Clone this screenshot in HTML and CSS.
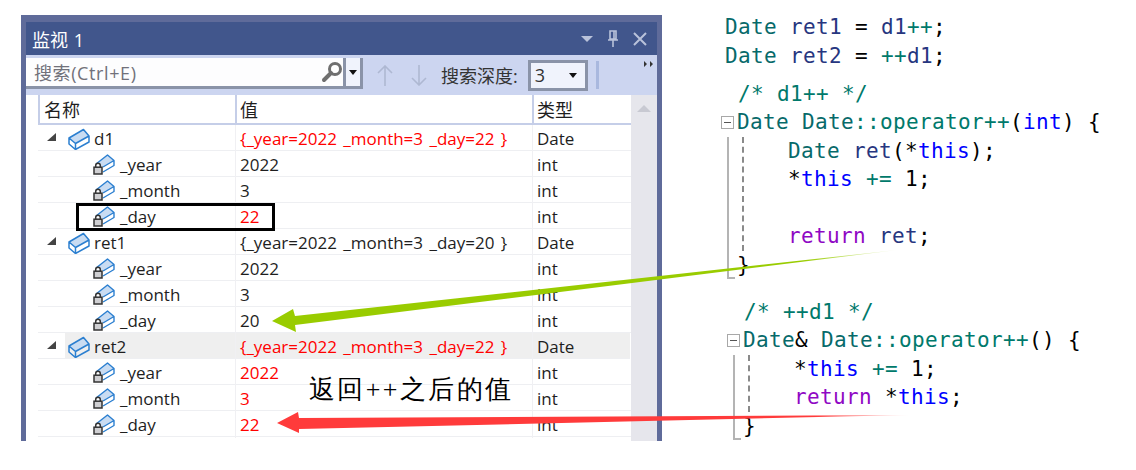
FILE: index.html
```html
<!DOCTYPE html>
<html lang="zh">
<head>
<meta charset="utf-8">
<title>监视 1</title>
<link rel="stylesheet" href="styles.css">
</head>
<body>
<svg class="defs" width="0" height="0" aria-hidden="true">
  <defs>
    <symbol id="cube" viewBox="0 0 22 22">
      <path d="M1 10 15.5 1.5 21 8 7.5 15.5Z" fill="#c9dcf2"/>
      <path d="M1 10 15.5 1.5 21 8V14L7.5 21.5 1 16ZM1 10 7.5 15.5 21 8M7.5 15.5V21.5" fill="none" stroke="#2b7fd0" stroke-width="1.5" stroke-linejoin="round"/>
    </symbol>
    <symbol id="member" viewBox="0 0 22 21">
      <path d="M3 10 14.5 1 21 6.5 10 13Z" fill="#c9dcf2"/>
      <path d="M3 10 14.5 1 21 6.5V11.5L10 18M10 13 21 6.5" fill="none" stroke="#2b7fd0" stroke-width="1.4" stroke-linejoin="round"/>
      <path d="M2.7 13V11.5a2.3 2.3 0 0 1 4.6 0V13" fill="#fff" stroke="#333" stroke-width="1.5"/>
      <rect x="1" y="13.2" width="8" height="6.8" fill="#cfcfd2" stroke="#333" stroke-width="1.5"/>
    </symbol>
  </defs>
</svg>
<main class="canvas">
  <section class="watch">
    <header class="titlebar">
      <span class="title">监视 1</span>
      <span class="controls">
        <svg class="ctl-drop" width="12" height="6" viewBox="0 0 12 6"><path d="M0 0H12L6 6Z" fill="#b9c2da"/></svg>
        <svg class="ctl-pin" width="10" height="18" viewBox="0 0 10 18"><path d="M2 1H8V9H2ZM0 10H10M5 10V17M6 1V9" fill="none" stroke="#b9c2da" stroke-width="1.6"/></svg>
        <svg class="ctl-x" width="14" height="14" viewBox="0 0 14 14"><path d="M1 1 13 13M13 1 1 13" fill="none" stroke="#b9c2da" stroke-width="2"/></svg>
      </span>
    </header>
    <div class="toolbar">
      <div class="searchbox">
        <span class="placeholder">搜索(Ctrl+E)</span>
        <svg width="22" height="22" viewBox="0 0 22 22"><circle cx="14" cy="8" r="5.5" fill="#fff" stroke="#6f6f6f" stroke-width="3"/><path d="M10 12 3 19" stroke="#6f6f6f" stroke-width="4" stroke-linecap="round"/></svg>
      </div>
      <div class="dropbtn"><i class="caret"></i></div>
      <svg class="arrow-up" width="16" height="21" viewBox="0 0 16 21"><path d="M8 21V1M1 8 8 1 15 8" fill="none" stroke="#aeb8d2" stroke-width="1.6"/></svg>
      <svg class="arrow-down" width="16" height="21" viewBox="0 0 16 21"><path d="M8 0V20M1 13 8 20 15 13" fill="none" stroke="#aeb8d2" stroke-width="1.6"/></svg>
      <span class="depth-label">搜索深度:</span>
      <div class="combo"><span>3</span><i class="caret"></i></div>
      <i class="tool-sep"></i>
      <svg class="overflow" width="9" height="6" viewBox="0 0 9 6"><path d="M0 0 3 3 0 6ZM6 0 9 3 6 6Z" fill="#333"/></svg>
    </div>
    <div class="body">
      <div class="table">
        <div class="row head">
          <div class="cell name">名称</div>
          <div class="cell">值</div>
          <div class="cell">类型</div>
        </div>

        <div class="row parent">
          <div class="cell name"><i class="tri"></i><span class="label"><svg width="22" height="22"><use href="#cube"/></svg>d1</span></div>
          <div class="cell red">{_year=2022 _month=3 _day=22 }</div>
          <div class="cell">Date</div>
        </div>
        <div class="row child">
          <div class="cell name"><svg width="22" height="21"><use href="#member"/></svg>_year</div>
          <div class="cell">2022</div>
          <div class="cell">int</div>
        </div>
        <div class="row child">
          <div class="cell name"><svg width="22" height="21"><use href="#member"/></svg>_month</div>
          <div class="cell">3</div>
          <div class="cell">int</div>
        </div>
        <div class="row child">
          <div class="cell name"><svg width="22" height="21"><use href="#member"/></svg>_day</div>
          <div class="cell red">22</div>
          <div class="cell">int</div>
        </div>

        <div class="row parent">
          <div class="cell name"><i class="tri"></i><span class="label"><svg width="22" height="22"><use href="#cube"/></svg>ret1</span></div>
          <div class="cell">{_year=2022 _month=3 _day=20 }</div>
          <div class="cell">Date</div>
        </div>
        <div class="row child">
          <div class="cell name"><svg width="22" height="21"><use href="#member"/></svg>_year</div>
          <div class="cell">2022</div>
          <div class="cell">int</div>
        </div>
        <div class="row child">
          <div class="cell name"><svg width="22" height="21"><use href="#member"/></svg>_month</div>
          <div class="cell">3</div>
          <div class="cell">int</div>
        </div>
        <div class="row child">
          <div class="cell name"><svg width="22" height="21"><use href="#member"/></svg>_day</div>
          <div class="cell">20</div>
          <div class="cell">int</div>
        </div>

        <div class="row parent selected">
          <div class="cell name"><i class="tri"></i><span class="label"><svg width="22" height="22"><use href="#cube"/></svg>ret2</span></div>
          <div class="cell red">{_year=2022 _month=3 _day=22 }</div>
          <div class="cell">Date</div>
        </div>
        <div class="row child">
          <div class="cell name"><svg width="22" height="21"><use href="#member"/></svg>_year</div>
          <div class="cell red">2022</div>
          <div class="cell">int</div>
        </div>
        <div class="row child">
          <div class="cell name"><svg width="22" height="21"><use href="#member"/></svg>_month</div>
          <div class="cell red">3</div>
          <div class="cell">int</div>
        </div>
        <div class="row child">
          <div class="cell name"><svg width="22" height="21"><use href="#member"/></svg>_day</div>
          <div class="cell red">22</div>
          <div class="cell">int</div>
        </div>
      </div>
      <div class="scrollbar"><svg width="14" height="7" viewBox="0 0 14 7"><path d="M0 7 7 0 14 7Z" fill="#c8c9d2"/></svg></div>
    </div>
  </section>

  <section class="code">
    <div class="line call"><span class="t">Date</span> <span class="v">ret1</span> = <span class="v">d1</span><span class="o">++</span>;</div>
    <div class="line call"><span class="t">Date</span> <span class="v">ret2</span> = <span class="o">++</span><span class="v">d1</span>;</div>

    <div class="block first">
      <div class="line comment">/* d1++ */</div>
      <div class="line fold-head"><i class="fold-box"></i><span><span class="t">Date Date</span><span class="o">::operator++</span>(<span class="k">int</span>) {</span></div>
      <div class="fold-body">
        <div class="guide">
          <div class="line"><span class="t">Date</span> <span class="v">ret</span>(*<span class="k">this</span>);</div>
          <div class="line">*<span class="k">this</span> <span class="o">+=</span> 1;</div>
          <div class="line">&nbsp;</div>
          <div class="line"><span class="r">return</span> <span class="v">ret</span>;</div>
        </div>
        <div class="line fold-end">}</div>
      </div>
    </div>

    <div class="block second">
      <div class="line comment">/* ++d1 */</div>
      <div class="line fold-head"><i class="fold-box"></i><span><span class="t">Date</span>&amp; <span class="t">Date</span><span class="o">::operator++</span>() {</span></div>
      <div class="fold-body">
        <div class="guide">
          <div class="line">*<span class="k">this</span> <span class="o">+=</span> 1;</div>
          <div class="line"><span class="r">return</span> *<span class="k">this</span>;</div>
        </div>
        <div class="line fold-end">}</div>
      </div>
    </div>
  </section>

  <div class="highlight"></div>
  <div class="note">返回++之后的值</div>
  <svg class="arrows" width="1136" height="470" viewBox="0 0 1136 470" aria-hidden="true">
    <defs>
      <linearGradient id="gfade" gradientUnits="userSpaceOnUse" x1="272" y1="0" x2="897" y2="0">
        <stop offset="0.85" stop-color="#99cc00"/>
        <stop offset="1" stop-color="#99cc00" stop-opacity="0.1"/>
      </linearGradient>
      <linearGradient id="rfade" gradientUnits="userSpaceOnUse" x1="277" y1="0" x2="909" y2="0">
        <stop offset="0.85" stop-color="#ff3b3b"/>
        <stop offset="1" stop-color="#ff3b3b" stop-opacity="0.1"/>
      </linearGradient>
    </defs>
    <path d="M272 321 293 309 295 316 897 250 295 325 296 332Z" fill="url(#gfade)"/>
    <path d="M277 423 298 412 299 418 909 415 299 429 299 433Z" fill="url(#rfade)"/>
  </svg>
</main>
</body>
</html>
```

FILE: styles.css
```css
* { box-sizing: border-box; }
html, body { margin: 0; padding: 0; background: #fff; }
.defs { position: absolute; }

.canvas {
  position: relative;
  width: 1136px;
  height: 470px;
  overflow: hidden;
  display: flex;
  align-items: flex-start;
  font-family: "Open Sans", "Noto Sans CJK SC", sans-serif;
  color: #1e1e1e;
}

/* Watch window */
.watch {
  width: 641px;
  height: 426px;
  margin: 15px 0 0 21px;
  padding: 7px 5px 0;
  background: #5f6b9a;
  display: flex;
  flex-direction: column;
}
.titlebar {
  height: 33px;
  flex: none;
  background: #41568c;
  display: flex;
  align-items: center;
  justify-content: space-between;
  padding: 0 10px 0 6px;
}
.title { color: #fff; font-size: 18px; word-spacing: 1px; }
.controls { display: flex; align-items: center; }
.ctl-drop { margin-right: 15px; }
.ctl-pin { margin-right: 15px; }

.toolbar {
  height: 40px;
  flex: none;
  background: #ccd5f0;
  display: flex;
  align-items: center;
  position: relative;
}
.searchbox {
  width: 317px;
  height: 31px;
  margin-top: -3px;
  background: #fdfdfe;
  border-bottom: 3px solid #8a93a8;
  display: flex;
  align-items: center;
  justify-content: space-between;
  padding: 0 0 0 8px;
}
.placeholder { font-size: 18px; letter-spacing: 0.6px; color: #71717a; }
.dropbtn {
  width: 20px;
  height: 31px;
  margin-top: -3px;
  background: #f0f3fc;
  border: 3px solid #8a93a8;
  border-top: 0;
  display: flex;
  align-items: center;
  justify-content: center;
}
.caret {
  width: 0;
  height: 0;
  border: 4px solid transparent;
  border-top: 5px solid #111;
  border-bottom: 0;
}
.arrow-up { margin-left: 14px; }
.arrow-down { margin-left: 18px; }
.depth-label { margin-left: 14px; font-size: 18px; color: #333; }
.combo {
  width: 60px;
  height: 31px;
  margin-left: 10px;
  background: #f0f3fc;
  border: 3px solid #8a93a8;
  display: flex;
  align-items: center;
  justify-content: space-between;
  padding: 0 8px 0 4px;
  font-size: 18px;
  color: #333;
}
.tool-sep { width: 3px; height: 28px; margin-left: 8px; background: #a9b8de; }
.overflow { position: absolute; right: 4px; top: 6px; }

.body {
  flex: 1;
  min-height: 0;
  display: flex;
  background: #fff;
}
.table { width: 605px; padding-left: 12px; flex: none; }
.row {
  display: grid;
  grid-template-columns: 197px 297px 99px;
  height: 26px;
  border-bottom: 1px solid #eeeff2;
  font-size: 17px;
  line-height: 27px;
  word-spacing: 2px;
  white-space: nowrap;
}
.cell { padding-left: 4px; border-left: 1px solid #f0f0f3; }
.row .name { border-left: 0; display: flex; align-items: center; }
.red { color: #ff0000; }

.row.head {
  height: 30px;
  border-bottom: 2px solid #c5cee8;
  font-size: 18px;
  line-height: 30px;
}
.row.head .cell { border-left: 2px solid #c5cee8; padding-left: 3px; }
.row.head .name { padding-left: 4px; }

.parent .name { padding-left: 9px; }
.tri {
  width: 9px;
  height: 8px;
  flex: none;
  background: #444;
  clip-path: polygon(100% 0, 100% 100%, 0 100%);
  margin-top: -3px;
}
.label {
  flex: 1;
  align-self: stretch;
  margin-left: 9px;
  padding-left: 3px;
  display: flex;
  align-items: center;
}
.label svg { margin-right: 4px; flex: none; }
.child .name { padding-left: 55px; }
.child .name svg { margin-right: 5px; flex: none; }
.row.selected { background: linear-gradient(90deg, #fff 27px, #efefef 27px); margin-right: 1px; }

.scrollbar {
  flex: 1;
  background: #e6e6ec;
  display: flex;
  justify-content: center;
  padding-top: 10px;
}
.scrollbar svg { display: block; }

/* Code */
.code {
  margin-left: 59px;
  padding-top: 13px;
  width: 400px;
  font-family: "DejaVu Sans Mono", monospace;
  font-size: 21px;
  letter-spacing: 0.36px;
  color: #000;
}
.line { height: 28.5px; line-height: 28.5px; white-space: pre; }
.call { padding-left: 4px; }
.t { color: #076a6a; }
.v { color: #27367f; }
.o { color: #00796b; }
.k { color: #0000ff; }
.r { color: #8f08c4; }
.comment { color: #00796b; padding-left: 17px; }

.block.first { margin-top: 9.5px; }
.block.second { margin-top: 18.5px; margin-left: 6px; }

.fold-head { display: flex; align-items: center; }
.fold-box {
  width: 13px;
  height: 13px;
  flex: none;
  margin-right: 3px;
  border: 1px solid #a8a8a8;
  background: linear-gradient(#555, #555) center / 7px 1px no-repeat #fff;
}
.fold-body {
  margin-left: 6px;
  border-left: 2px solid #b4b4b4;
  position: relative;
}
.guide {
  margin-left: 13px;
  padding-left: 44px;
  border-left: 2px dashed #8a8a8a;
}
.fold-end {
  padding-left: 8px;
  position: relative;
}
.fold-end::after {
  content: "";
  position: absolute;
  left: 0;
  bottom: 0;
  width: 6px;
  height: 2px;
  background: #b4b4b4;
}

/* Overlays */
.highlight {
  position: absolute;
  left: 76px;
  top: 203px;
  width: 199px;
  height: 28px;
  border: 3px solid #000;
}
.note {
  position: absolute;
  left: 309px;
  top: 370px;
  font-family: "Liberation Serif", serif;
  font-size: 26px;
  line-height: 40px;
  letter-spacing: 2.4px;
  color: #000;
  white-space: nowrap;
}
.arrows { position: absolute; left: 0; top: 0; pointer-events: none; }
```
